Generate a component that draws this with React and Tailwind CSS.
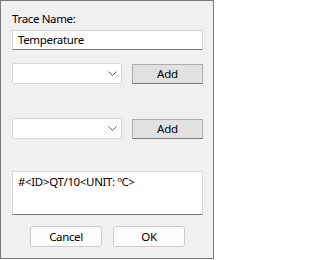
import React from "react";

const font = { fontFamily: '"Noto Sans", "Liberation Sans", Arial, sans-serif' };

function Chevron() {
  return (
    <svg width="9" height="5" viewBox="0 0 9 5" className="shrink-0">
      <polyline points="0.5,0.5 4.5,4.5 8.5,0.5" fill="none" stroke="#606060" strokeWidth="1" />
    </svg>
  );
}

function ComboRow() {
  return (
    <div className="flex items-center h-[21px]">
      <div className="w-[110px] h-[21px] bg-white border border-[#d9d9d9] rounded-[2px] flex items-center justify-end pr-[4px]">
        <Chevron />
      </div>
      <button className="ml-[10px] w-[71px] h-[20px] bg-[#e1e1e1] border border-[#adadad] border-b-[#7a7a7a] text-[11.5px] tracking-[-0.2px] leading-none text-black">
        Add
      </button>
    </div>
  );
}

export default function App() {
  return (
    <div
      className="w-[214px] h-[259px] border border-[#7a7a7a] bg-[#f0f0f0] pl-[11px] pr-[10px] pt-[10px] flex flex-col text-black text-[11.5px] tracking-[-0.35px]"
      style={font}
    >
      <div className="leading-[16px] h-[16px]">Trace Name:</div>
      <div className="mt-[3px] h-[20px] bg-white border border-[#d9d9d9] border-b-[#7a7a7a] flex items-center px-[5px]">
        Temperature
      </div>
      <div className="mt-[13px]">
        <ComboRow />
      </div>
      <div className="mt-[34px]">
        <ComboRow />
      </div>
      <div className="mt-[32px] h-[44px] bg-white border border-[#d9d9d9] border-b-[#7a7a7a] px-[5px] pt-[2px] leading-[16px]">
        #&lt;ID&gt;QT/10&lt;UNIT: ºC&gt;
      </div>
      <div className="mt-[11px] flex justify-center gap-[11px]">
        <button className="w-[72px] h-[21px] bg-[#fdfdfd] border border-[#cccccc] rounded-[3px] leading-none">
          Cancel
        </button>
        <button className="w-[72px] h-[21px] bg-[#fdfdfd] border border-[#cccccc] rounded-[3px] leading-none">
          OK
        </button>
      </div>
    </div>
  );
}
